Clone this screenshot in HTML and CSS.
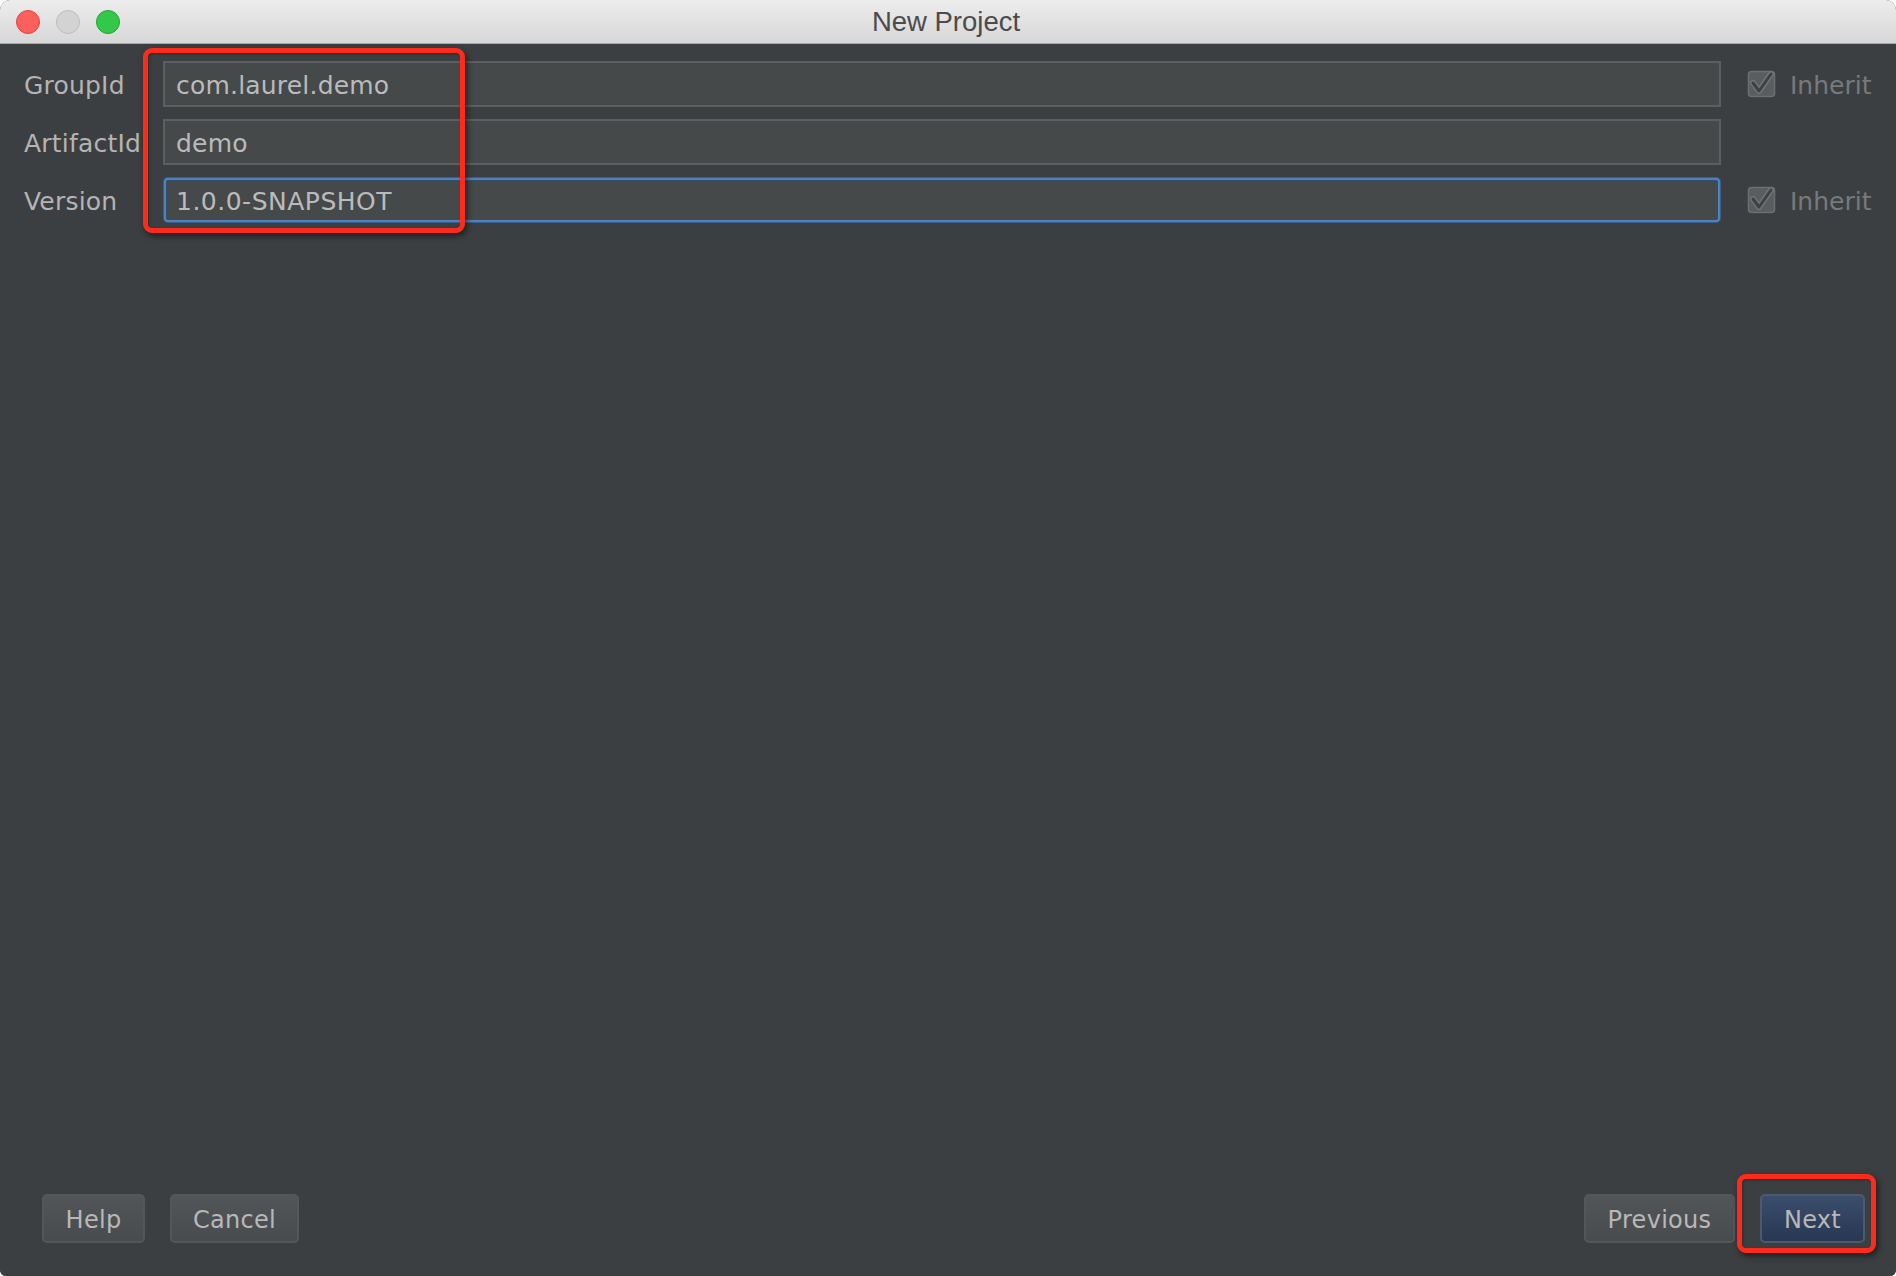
FILE: index.html
```html
<!DOCTYPE html>
<html>
<head>
<meta charset="utf-8">
<title>New Project</title>
<link rel="stylesheet" href="styles.css">
</head>
<body>
<div class="window">
  <div class="titlebar">
    <div class="lights">
      <span class="light red"></span>
      <span class="light gray"></span>
      <span class="light green"></span>
    </div>
    <div class="title">New Project</div>
  </div>
  <div class="content">
    <div class="form">
      <label class="label">GroupId</label>
      <div class="field">com.laurel.demo</div>
      <div class="inherit">
        <svg class="check" width="30" height="30" viewBox="0 0 30 30"><rect x="1.5" y="3.5" width="26" height="25" rx="3" fill="#3a3d3f"/><rect x="1.5" y="1.5" width="26" height="25" rx="3" fill="#5a5d5f" stroke="#6c6e70" stroke-width="1.5"/><polyline points="6,13 12,21 24,4" fill="none" stroke="#717375" stroke-width="6" stroke-linejoin="round" stroke-linecap="round"/><polyline points="6,13 12,21 24,4" fill="none" stroke="#3e4143" stroke-width="3" stroke-linejoin="round" stroke-linecap="round"/></svg>
        <span>Inherit</span>
      </div>
      <label class="label">ArtifactId</label>
      <div class="field">demo</div>
      <div class="inherit empty"></div>
      <label class="label">Version</label>
      <div class="field focused">1.0.0-SNAPSHOT</div>
      <div class="inherit">
        <svg class="check" width="30" height="30" viewBox="0 0 30 30"><rect x="1.5" y="3.5" width="26" height="25" rx="3" fill="#3a3d3f"/><rect x="1.5" y="1.5" width="26" height="25" rx="3" fill="#5a5d5f" stroke="#6c6e70" stroke-width="1.5"/><polyline points="6,13 12,21 24,4" fill="none" stroke="#717375" stroke-width="6" stroke-linejoin="round" stroke-linecap="round"/><polyline points="6,13 12,21 24,4" fill="none" stroke="#3e4143" stroke-width="3" stroke-linejoin="round" stroke-linecap="round"/></svg>
        <span>Inherit</span>
      </div>
    </div>
    <div class="spacer"></div>
    <div class="buttons">
      <div class="group">
        <button class="btn help">Help</button>
        <button class="btn cancel">Cancel</button>
      </div>
      <div class="group">
        <button class="btn prev">Previous</button>
        <button class="btn next">Next</button>
      </div>
    </div>
  </div>
  <div class="mark mark-fields"></div>
  <div class="mark mark-next"></div>
</div>
</body>
</html>
```
FILE: styles.css
```css
html, body {
  margin: 0;
  padding: 0;
  background: #ffffff;
}
.window {
  position: relative;
  width: 1896px;
  height: 1276px;
  display: flex;
  flex-direction: column;
  border-radius: 10px 10px 6px 6px;
  overflow: hidden;
  background: #3c3f41;
  font-family: "DejaVu Sans", "Lato", sans-serif;
}
.titlebar {
  position: relative;
  height: 43px;
  flex: 0 0 43px;
  background: linear-gradient(#ededed, #d7d7d7);
  border-bottom: 1px solid #a9a9a9;
  display: flex;
  align-items: center;
  justify-content: center;
}
.lights {
  position: absolute;
  left: 16px;
  top: 10px;
  display: flex;
  gap: 16px;
}
.light {
  width: 24px;
  height: 24px;
  border-radius: 50%;
  box-sizing: border-box;
}
.light.red { background: #fc605c; border: 1px solid #e0443e; }
.light.gray { background: #d3d3d3; border: 1px solid #bcbcbc; }
.light.green { background: #34c84a; border: 1px solid #1fa632; }
.title {
  font-family: "Liberation Sans", Arial, sans-serif;
  font-size: 27.5px;
  color: #4b4b4b;
  margin-top: 1px;
  margin-left: -4px;
}
.content {
  flex: 1;
  display: flex;
  flex-direction: column;
  background: #3c3f41;
}
.form {
  display: grid;
  grid-template-columns: 139px 1558px auto;
  grid-auto-rows: 46px;
  row-gap: 12px;
  padding: 17px 0 0 24px;
  align-items: center;
}
.label {
  font-size: 25px;
  letter-spacing: 0.2px;
  color: #b4b4b4;
  white-space: nowrap;
  padding-top: 3px;
}
.field {
  height: 46px;
  box-sizing: border-box;
  background: #45494a;
  border: 2px solid #5c5f60;
  padding: 3px 0 0 11px;
  font-size: 25px;
  letter-spacing: 0.2px;
  color: #bbbbbb;
  display: flex;
  align-items: center;
}
.field.focused {
  height: 44px;
  margin: 0 1px;
  border: 2px solid #4f82bd;
  border-radius: 4px;
  box-shadow: 0 0 0 1px #3b5f88, inset 0 0 0 1px #33506f;
  padding-left: 10px;
  letter-spacing: 0.5px;
}
.inherit {
  display: flex;
  align-items: center;
  gap: 13px;
  padding-left: 26px;
  padding-top: 3px;
  font-size: 25px;
  color: #777a7c;
}
.check {
  display: block;
  margin-top: -2px;
}
.spacer {
  flex: 1;
}
.buttons {
  display: flex;
  justify-content: space-between;
  padding: 0 31px 33px 42px;
}
.group {
  display: flex;
  gap: 25px;
}
.btn {
  height: 49px;
  box-sizing: border-box;
  border-radius: 5px;
  border: 2px solid #53575a;
  background: linear-gradient(#515557, #484c4e);
  color: #b8b8b8;
  font-family: "DejaVu Sans", sans-serif;
  font-size: 24px;
  letter-spacing: 0.3px;
  padding: 2px 0 0;
}
.btn.help { width: 103px; }
.btn.cancel { width: 129px; }
.btn.prev { width: 151px; }
.btn.next {
  width: 105px;
  background: linear-gradient(#3a4d6c, #283853);
  border-color: #4d5a6c;
}
.mark {
  position: absolute;
  box-sizing: border-box;
  border: 5px solid #fe2b1c;
  border-radius: 9px;
  box-shadow: 2px 3px 6px rgba(0, 0, 0, 0.55), inset 1px 1px 3px rgba(0, 0, 0, 0.3);
}
.mark-fields {
  left: 143px;
  top: 48px;
  width: 322px;
  height: 185px;
}
.mark-next {
  left: 1737px;
  top: 1174px;
  width: 139px;
  height: 79px;
}
```
